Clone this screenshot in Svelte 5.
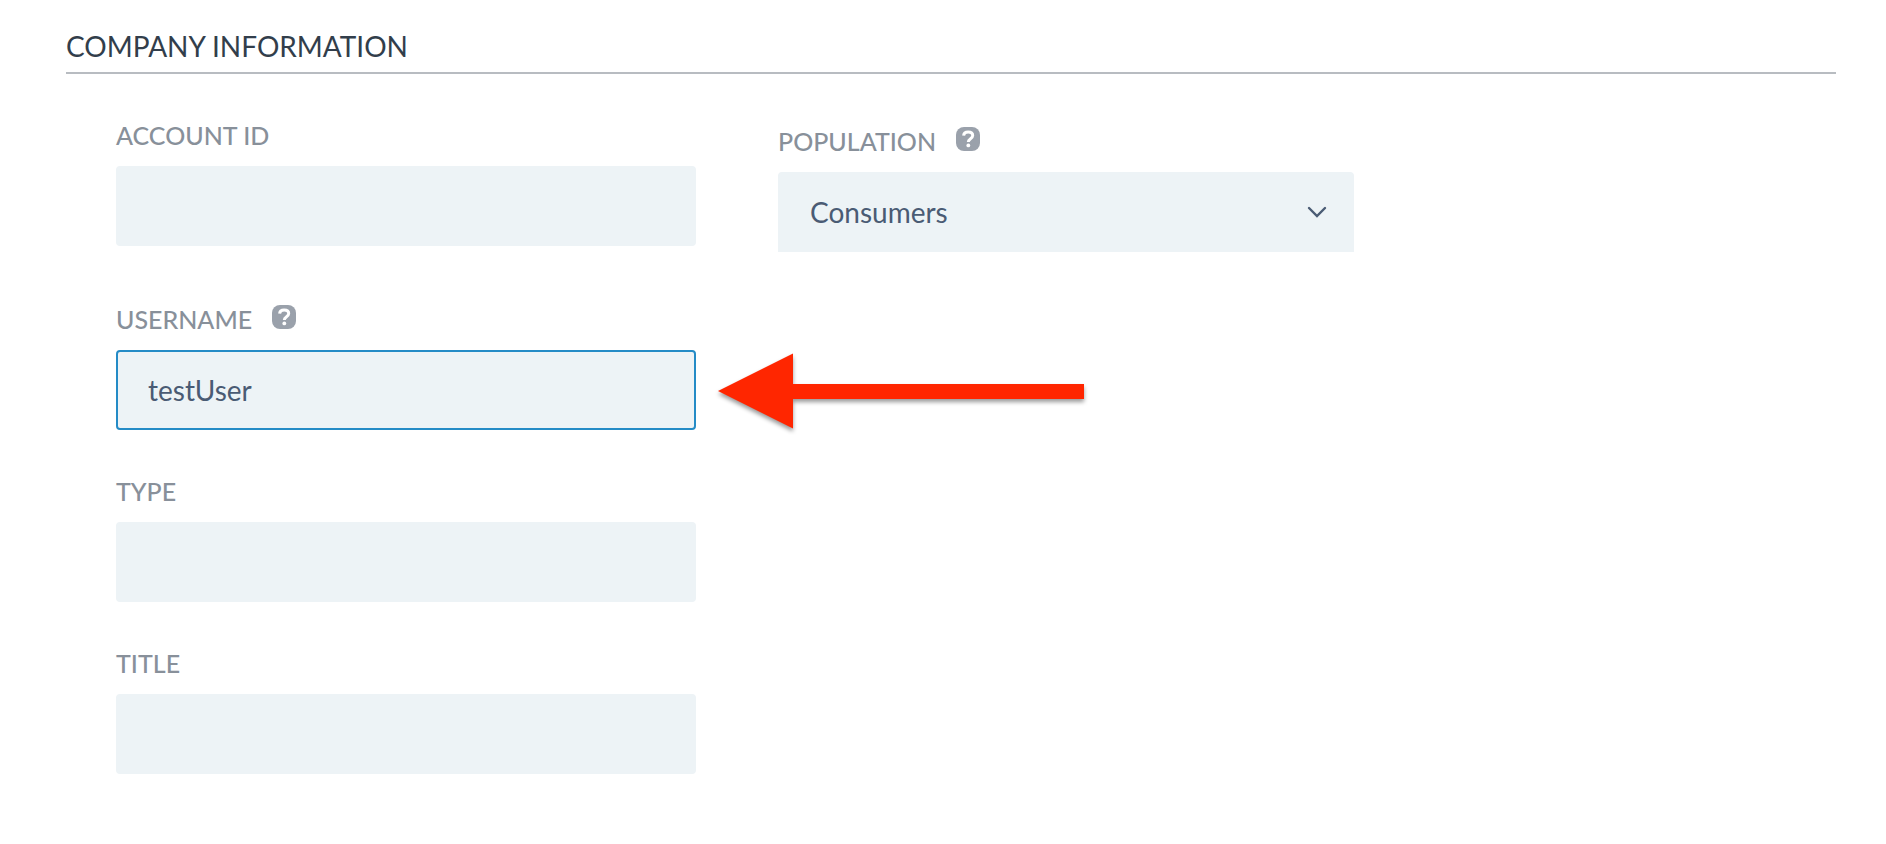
<script>
  let accountId = $state('');
  let population = $state('Consumers');
  let username = $state('testUser');
  let type = $state('');
  let title = $state('');
</script>

{#snippet help(topic)}
  <button class="help" type="button" aria-label={`Help: ${topic}`}>
    <svg viewBox="0 0 24 24" width="24" height="24" aria-hidden="true">
      <rect width="24" height="24" rx="8" fill="#9aa1ab" />
      <path
        d="M7.600 8.600C7.800 6.400 9.600 5 12.100 5c2.600 0 4.600 1.300 4.600 3.600 0 1.700-1 2.500-2.400 3.400-1.300.9-2 1.500-2 3.100"
        fill="none"
        stroke="#fff"
        stroke-width="3"
      />
      <circle cx="12.300" cy="18.400" r="1.900" fill="#fff" />
    </svg>
  </button>
{/snippet}

<section class="panel">
  <h2>COMPANY INFORMATION</h2>

  <form class="fields">
    <div class="field">
      <div class="caption"><label for="account-id">ACCOUNT ID</label></div>
      <input id="account-id" type="text" bind:value={accountId} />
    </div>

    <div class="field">
      <div class="caption">
        <label for="population">POPULATION</label>
        {@render help('population')}
      </div>
      <div class="control">
        <select id="population" bind:value={population}>
          <option>Consumers</option>
        </select>
        <svg class="chevron" viewBox="0 0 20 12" width="20" height="12" aria-hidden="true">
          <path d="M2 2l8 8 8-8" fill="none" stroke="#4a5b74" stroke-width="2.400" stroke-linecap="round" />
        </svg>
      </div>
    </div>

    <div class="field first">
      <div class="caption">
        <label for="username">USERNAME</label>
        {@render help('username')}
      </div>
      <div class="control">
        <input id="username" class="active" type="text" bind:value={username} />
        <svg class="arrow" viewBox="0 0 366 76" width="366" height="76" aria-hidden="true">
          <path d="M0 38L75 0.500V31H366V46H75V75.500Z" fill="#ff2600" />
        </svg>
      </div>
    </div>

    <div class="field first">
      <div class="caption"><label for="type">TYPE</label></div>
      <input id="type" type="text" bind:value={type} />
    </div>

    <div class="field first">
      <div class="caption"><label for="title">TITLE</label></div>
      <input id="title" type="text" bind:value={title} />
    </div>
  </form>
</section>

<style>
  :global(body) {
    background: #fff;
  }

  .panel {
    padding: 28px 50px 70px 66px;
    font-family: Lato, 'Liberation Sans', sans-serif;
  }

  h2 {
    margin: 0;
    padding-bottom: 8px;
    border-bottom: 2px solid #b8bcc1;
    color: #323e4b;
    font-size: 28px;
    font-weight: 400;
    line-height: 36px;
  }

  .fields {
    display: grid;
    grid-template-columns: 580fr 576fr 400fr;
    gap: 45px 82px;
    align-items: start;
    padding: 45px 0 0 50px;
  }

  .first {
    grid-column: 1;
  }

  .caption {
    display: flex;
    align-items: flex-end;
    gap: 20px;
    margin-bottom: 15px;
  }

  label {
    color: #88909a;
    font-size: 25px;
    font-weight: 500;
    line-height: 32px;
  }

  .help {
    display: flex;
    padding: 8px 0 6px;
    border: 0;
    background: none;
    cursor: pointer;
  }

  .control {
    position: relative;
  }

  input,
  select {
    display: block;
    box-sizing: border-box;
    width: 100%;
    height: 80px;
    padding: 0 30px;
    border: 2px solid #edf3f6;
    border-radius: 4px;
    outline: 0;
    background: #edf3f6;
    color: #4a5b74;
    font-family: inherit;
    font-size: 28px;
    font-weight: 400;
  }

  select {
    appearance: none;
    border-radius: 4px 4px 0 0;
  }

  input.active,
  input:focus {
    border-color: #248bc6;
  }

  .chevron {
    position: absolute;
    top: 34px;
    right: 27px;
    pointer-events: none;
  }

  .arrow {
    position: absolute;
    top: 3px;
    left: calc(100% + 22px);
    overflow: visible;
    filter: drop-shadow(0 3px 2px rgba(0, 0, 0, 0.4));
    pointer-events: none;
  }
</style>
